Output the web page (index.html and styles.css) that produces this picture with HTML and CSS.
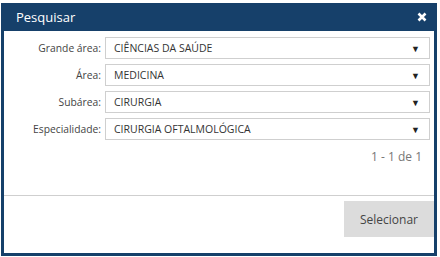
FILE: index.html
```html
<!DOCTYPE html>
<html lang="pt">
  <head>
    <meta charset="UTF-8" />
    <title>Pesquisar</title>
    <link rel="stylesheet" href="styles.css">
  </head>
  <body>
    <div class="dialog">
      <div class="cabecalho">
        <span class="titulo">Pesquisar</span>
        <button class="fechar" title="Fechar">
          <svg width="10" height="10" viewBox="0 0 10 10">
            <path d="M1.5 1.5 L8.5 8.5 M8.5 1.5 L1.5 8.5" stroke="#fff" stroke-width="2.6" />
          </svg>
        </button>
      </div>
      <div class="corpo">
        <div class="campo">
          <label>Grande área:</label>
          <div class="combo">CIÊNCIAS DA SAÚDE<span class="seta">&#9660;</span></div>
        </div>
        <div class="campo">
          <label>Área:</label>
          <div class="combo">MEDICINA<span class="seta">&#9660;</span></div>
        </div>
        <div class="campo">
          <label>Subárea:</label>
          <div class="combo">CIRURGIA<span class="seta">&#9660;</span></div>
        </div>
        <div class="campo">
          <label>Especialidade:</label>
          <div class="combo">CIRURGIA OFTALMOLÓGICA<span class="seta">&#9660;</span></div>
        </div>
        <div class="paginacao">1 - 1 de 1</div>
      </div>
      <div class="rodape">
        <button class="selecionar">Selecionar</button>
      </div>
    </div>
  </body>
</html>
```

FILE: styles.css
```css
body {
  margin: 0;
  background-color: #fff;
  font-family: "Open Sans", sans-serif;
  color: #333;
}

.dialog {
  margin: 3px 0 0 1px;
  width: 436px;
  height: 253px;
  box-sizing: border-box;
  border: 3px solid #16406a;
  border-top: 0;
  display: flex;
  flex-direction: column;
}

.cabecalho {
  height: 28px;
  margin: 0 -3px;
  background-color: #16406a;
  display: flex;
  align-items: center;
  justify-content: space-between;
  padding: 0 10px 0 15px;
}

.titulo {
  color: #fff;
  font-size: 13px;
}

.fechar {
  border: none;
  background: none;
  padding: 0;
  cursor: pointer;
  display: flex;
}

.corpo {
  height: 165px;
  box-sizing: border-box;
  padding: 6px 4px 0 0;
  border-bottom: 1px solid #cfcfcf;
  display: flex;
  flex-direction: column;
  gap: 5px;
}

.campo {
  display: flex;
  align-items: center;
  gap: 4px;
}

.campo label {
  width: 97px;
  text-align: right;
  font-size: 10.3px;
  color: #444;
}

.combo {
  flex: 1;
  height: 22px;
  box-sizing: border-box;
  border: 1px solid #cfcfcf;
  padding: 0 9px 0 8px;
  display: flex;
  align-items: center;
  justify-content: space-between;
  font-size: 10.5px;
  color: #333;
}

.seta {
  font-size: 9px;
  color: #222;
}

.paginacao {
  text-align: right;
  font-size: 12px;
  color: #777;
  padding: 3px 8px 0 0;
}

.rodape {
  flex: 1;
  display: flex;
  justify-content: flex-end;
  align-items: flex-start;
  padding-top: 5px;
}

.selecionar {
  width: 90px;
  height: 36px;
  border: none;
  background-color: #dcdcdc;
  color: #444;
  font-family: "Open Sans", sans-serif;
  font-size: 12px;
  cursor: pointer;
}
```
